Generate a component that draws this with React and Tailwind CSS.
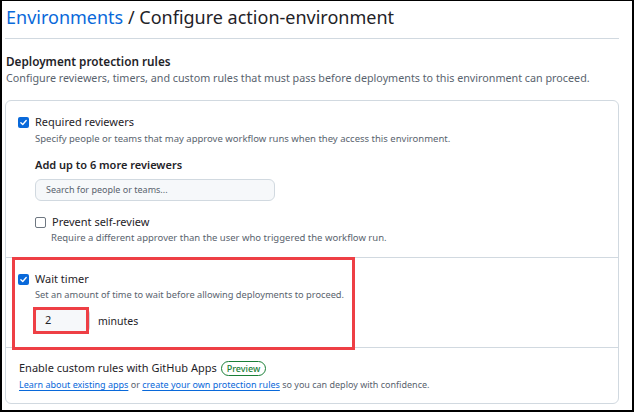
import React from 'react';

const Check = ({ checked }) => (
  <span
    className={`flex h-[11px] w-[11px] shrink-0 items-center justify-center rounded-[2px] ${
      checked ? 'bg-[#0969da]' : 'border border-[#6e7781] bg-white'
    }`}
  >
    {checked && (
      <svg viewBox="0 0 12 12" className="h-[9px] w-[9px]">
        <path d="M2.5 6.2 L5 8.6 L9.6 3.4" fill="none" stroke="white" strokeWidth="1.8" strokeLinecap="round" strokeLinejoin="round" />
      </svg>
    )}
  </span>
);

export default function App() {
  return (
    <div className="h-[412px] w-[634px] overflow-hidden border-t border-r-2 border-b-2 border-l-2 border-black bg-white pr-[13px] pl-[3px] font-['Segoe_UI','Noto_Sans',sans-serif] text-[#1f2328]">
      {/* Header */}
      <div className="border-b border-[#d1d9e0] pt-[2px] pb-[7px] pl-[1px]">
        <h1 className="text-[18px] leading-[28px]">
          <span className="text-[#0969da]">Environments</span> / Configure action-environment
        </h1>
      </div>

      <div className="mt-[14px] pl-[1px]">
        <h2 className="text-[11.75px] leading-[17px] font-semibold">Deployment protection rules</h2>
        <p className="text-[10.75px] leading-[16px] text-[#59636e]">
          Configure reviewers, timers, and custom rules that must pass before deployments to this environment can proceed.
        </p>
      </div>

      {/* Rules box */}
      <div className="mt-[14px] rounded-md border border-[#d1d9e0]">
        <div className="border-b border-[#d1d9e0] pt-[12px] pb-[12px] pl-[12px]">
          <div className="flex items-center gap-[6px]">
            <Check checked />
            <span className="text-[11px] leading-[18px]">Required reviewers</span>
          </div>
          <p className="pl-[17px] text-[9.5px] leading-[16px] text-[#59636e]">
            Specify people or teams that may approve workflow runs when they access this environment.
          </p>
          <div className="pl-[17px]">
            <p className="mt-[9px] text-[11px] leading-[18px] font-semibold">Add up to 6 more reviewers</p>
            <div className="mt-[5px] flex h-[22px] w-[240px] items-center rounded-md border border-[#d1d9e0] bg-[#f6f8fa] pl-[10px] text-[9px] text-[#59636e]">
              Search for people or teams...
            </div>
            <div className="mt-[12px] flex items-center gap-[6px]">
              <Check />
              <span className="text-[11px] leading-[18px]">Prevent self-review</span>
            </div>
            <p className="pl-[16px] text-[9.5px] leading-[14px] text-[#59636e]">
              Require a different approver than the user who triggered the workflow run.
            </p>
          </div>
        </div>

        <div className="relative border-b border-[#d1d9e0] pt-[12px] pb-[13px] pl-[12px]">
          <div className="flex items-center gap-[6px]">
            <Check checked />
            <span className="text-[11px] leading-[18px]">Wait timer</span>
          </div>
          <p className="pl-[17px] text-[9.25px] leading-[14px] text-[#59636e]">
            Set an amount of time to wait before allowing deployments to proceed.
          </p>
          <div className="mt-[5px] flex items-center gap-[8px] pl-[15px]">
            <div className="relative h-[27px] w-[57px]">
              <div className="absolute top-[1px] right-0 bottom-[1px] left-[1px] rounded-md border border-[#d1d9e0] bg-[#f6f8fa]" />
              <div className="absolute inset-y-0 left-0 w-[56px] border-[3px] border-[#ee3f45]" />
              <span className="absolute top-[4px] left-[12px] text-[11px] leading-[18px]">2</span>
            </div>
            <span className="text-[10.5px] leading-[18px]">minutes</span>
          </div>
          {/* annotation */}
          <div className="pointer-events-none absolute top-[-1px] left-[6px] h-[93px] w-[343px] border-[3px] border-[#ee3f45]" />
        </div>

        <div className="pt-[11px] pb-[10px] pl-[13px]">
          <div className="flex items-center gap-[4px]">
            <span className="text-[11px] leading-[18px]">Enable custom rules with GitHub Apps</span>
            <span className="rounded-full border border-[#1a7f37] px-[5px] text-[9px] leading-[13px] font-medium text-[#1a7f37]">
              Preview
            </span>
          </div>
          <p className="text-[9px] leading-[16px] text-[#59636e]">
            <span className="text-[#0969da] underline underline-offset-2">Learn about existing apps</span> or{' '}
            <span className="text-[#0969da] underline underline-offset-2">create your own protection rules</span> so you can deploy with confidence.
          </p>
        </div>
      </div>
    </div>
  );
}
